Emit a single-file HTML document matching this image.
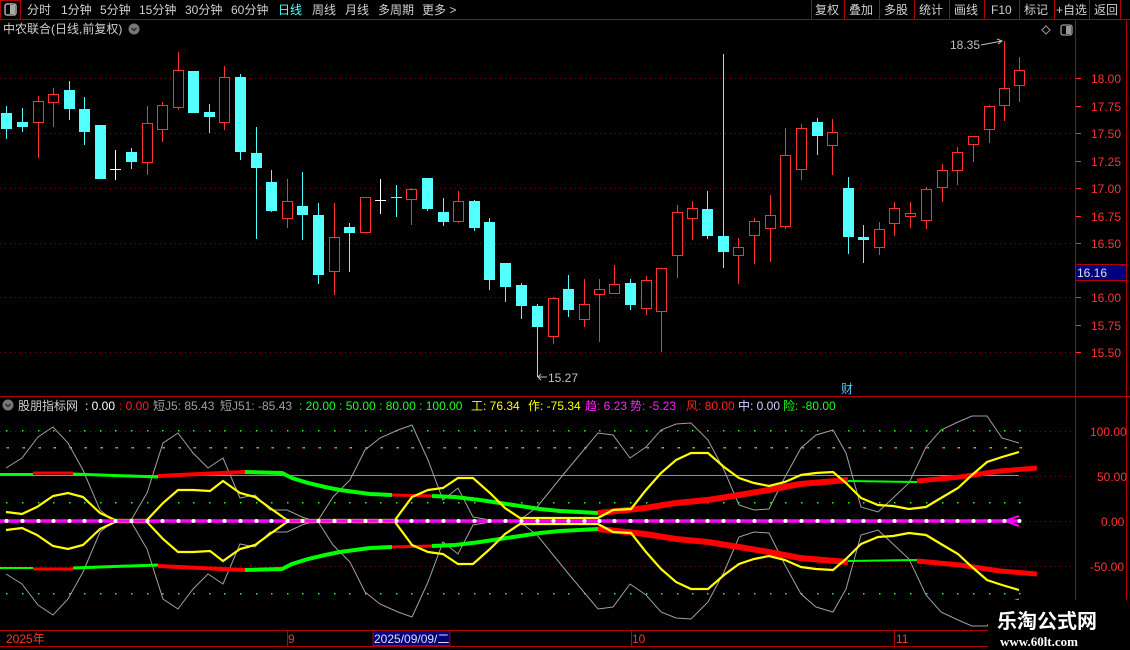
<!DOCTYPE html>
<html><head><meta charset="utf-8"><style>
html,body{margin:0;padding:0;background:#000;width:1130px;height:650px;overflow:hidden}
svg{display:block}
text{font-family:"Liberation Sans","Noto Sans CJK SC",sans-serif;font-size:12px}
</style></head><body>
<svg id="s" width="1130" height="650" viewBox="0 0 1130 650" xmlns="http://www.w3.org/2000/svg">
<rect width="1130" height="650" fill="#000"/>
<!-- top bar -->
<line x1="0" y1="19.5" x2="1130" y2="19.5" stroke="#b00000"/>
<rect x="0.5" y="0.5" width="20" height="19" fill="none" stroke="#b00000"/>
<rect x="5" y="4" width="11" height="11" rx="2" fill="none" stroke="#aaa" stroke-width="1.5"/>
<rect x="10" y="5" width="5" height="9" fill="#aaa"/>
<g fill="#d0d0d0">
<text x="27" y="14">分时</text><text x="61" y="14">1分钟</text><text x="100" y="14">5分钟</text>
<text x="139" y="14">15分钟</text><text x="185" y="14">30分钟</text><text x="231" y="14">60分钟</text>
<text x="278" y="14" fill="#54ffff">日线</text><text x="312" y="14">周线</text><text x="345" y="14">月线</text>
<text x="378" y="14">多周期</text><text x="422" y="14">更多 &gt;</text>
</g>
<g stroke="#b00000">
<line x1="811.5" y1="0" x2="811.5" y2="19"/><line x1="844.5" y1="0" x2="844.5" y2="19"/>
<line x1="879.5" y1="0" x2="879.5" y2="19"/><line x1="914.5" y1="0" x2="914.5" y2="19"/>
<line x1="949.5" y1="0" x2="949.5" y2="19"/><line x1="984.5" y1="0" x2="984.5" y2="19"/>
<line x1="1019.5" y1="0" x2="1019.5" y2="19"/><line x1="1054.5" y1="0" x2="1054.5" y2="19"/>
<line x1="1089.5" y1="0" x2="1089.5" y2="19"/><line x1="1120.5" y1="0" x2="1120.5" y2="19"/>
</g>
<g fill="#d0d0d0">
<text x="815" y="14">复权</text><text x="849" y="14">叠加</text><text x="884" y="14">多股</text>
<text x="919" y="14">统计</text><text x="954" y="14">画线</text><text x="991" y="14">F10</text>
<text x="1024" y="14">标记</text><text x="1056" y="14">+自选</text><text x="1094" y="14">返回</text>
</g>
<text x="3" y="33" fill="#d0d0d0">中农联合(日线,前复权)</text>
<circle cx="134" cy="29" r="5.5" fill="#777"/><path d="M131.5 28 L134 30.5 L136.5 28" fill="none" stroke="#222" stroke-width="1.3"/>
<path d="M1046 26 L1050 30 L1046 34 L1042 30 Z" fill="none" stroke="#999"/>
<rect x="1061" y="25" width="11" height="10" rx="2" fill="none" stroke="#999" stroke-width="1.3"/><rect x="1066" y="26" width="5" height="8" fill="#999"/>
<!-- axes -->
<line x1="1075.5" y1="19" x2="1075.5" y2="630" stroke="#b00000"/>
<line x1="1126.5" y1="19" x2="1126.5" y2="630" stroke="#b00000"/>
<line x1="0" y1="396.5" x2="1130" y2="396.5" stroke="#b00000"/>
<g stroke="#8a0000" stroke-dasharray="1 4">
<line x1="0" y1="78.5" x2="1075" y2="78.5"/><line x1="0" y1="133.5" x2="1075" y2="133.5"/>
<line x1="0" y1="188.5" x2="1075" y2="188.5"/><line x1="0" y1="243.5" x2="1075" y2="243.5"/>
<line x1="0" y1="297.5" x2="1075" y2="297.5"/><line x1="0" y1="352.5" x2="1075" y2="352.5"/>
</g>
<g fill="#ff3232">
<text x="1091" y="83">18.00</text><text x="1091" y="111">17.75</text><text x="1091" y="138">17.50</text>
<text x="1091" y="166">17.25</text><text x="1091" y="193">17.00</text><text x="1091" y="221">16.75</text>
<text x="1091" y="248">16.50</text><text x="1091" y="302">16.00</text><text x="1091" y="330">15.75</text>
<text x="1091" y="357">15.50</text>
</g>
<g stroke="#ff3232"><line x1="1076" y1="78.5" x2="1081" y2="78.5"/><line x1="1076" y1="106.5" x2="1081" y2="106.5"/><line x1="1076" y1="133.5" x2="1081" y2="133.5"/><line x1="1076" y1="161.5" x2="1081" y2="161.5"/><line x1="1076" y1="188.5" x2="1081" y2="188.5"/><line x1="1076" y1="216.5" x2="1081" y2="216.5"/><line x1="1076" y1="243.5" x2="1081" y2="243.5"/><line x1="1076" y1="297.5" x2="1081" y2="297.5"/><line x1="1076" y1="325.5" x2="1081" y2="325.5"/><line x1="1076" y1="352.5" x2="1081" y2="352.5"/></g>
<rect x="1075.5" y="264.5" width="51" height="16" fill="#000080" stroke="#b00000"/>
<text x="1077" y="277" fill="#e0e0e0">16.16</text>
<g id="candles"></g>
<text x="950" y="49" fill="#c0c0c0">18.35</text>
<path d="M981 45 L1002 41 M997 39 L1002 41 L998 44" stroke="#c0c0c0" fill="none"/>
<text x="548" y="382" fill="#c0c0c0">15.27</text>
<path d="M538 377 L547 377 M541 374 L538 377 L541 380" stroke="#c0c0c0" fill="none"/>
<rect x="840" y="382" width="15" height="13" fill="#000"/>
<text x="841" y="393" fill="#54c8ff">财</text>
<!-- indicator header -->
<circle cx="8" cy="405" r="5.5" fill="#777"/><path d="M5.5 404 L8 406.5 L10.5 404" fill="none" stroke="#222" stroke-width="1.3"/>
<text x="18" y="410" fill="#d0d0d0">股朋指标网</text>
<text x="85" y="410" fill="#fff">: 0.00</text>
<text x="119" y="410" fill="#ff2020">: 0.00</text>
<text x="153" y="410" fill="#a0a0a0">短J5: 85.43</text>
<text x="220" y="410" fill="#a0a0a0">短J51: -85.43</text>
<text x="299" y="410" fill="#20ff20">: 20.00 : 50.00 : 80.00 : 100.00</text>
<text x="471" y="410" fill="#ffff00">工: 76.34</text>
<text x="528" y="410" fill="#ffff00">作: -75.34</text>
<text x="585" y="410" fill="#ff20ff">趋: 6.23</text>
<text x="630" y="410" fill="#ff20ff">势: -5.23</text>
<text x="686" y="410" fill="#ff2020">风: 80.00</text>
<text x="738" y="410" fill="#d0d0ff">中: 0.00</text>
<text x="783" y="410" fill="#20ff20">险: -80.00</text>
<!-- indicator grid -->
<g stroke="#8a0000" stroke-dasharray="1 4">
<line x1="0" y1="431.5" x2="1075" y2="431.5"/><line x1="0" y1="566.5" x2="1075" y2="566.5"/>
<line x1="1020" y1="476.5" x2="1075" y2="476.5"/><line x1="1020" y1="521.5" x2="1075" y2="521.5"/>
</g>
<g id="dots"></g>
<g fill="#ff3232">
<text x="1090" y="436">100.00</text><text x="1097" y="481">50.00</text><text x="1101" y="526">0.00</text><text x="1090" y="571">-50.00</text>
</g>
<line x1="0" y1="475.5" x2="1019" y2="475.5" stroke="#20e020"/>
<g id="upper">
<polyline fill="none" stroke="#a0a0a0" stroke-width="1" points="6,468 22,458 38,437 53,427 68,443 83,470 100,510 115,522 130,522 147,493 163,443 178,433 193,453 208,468 223,458 240,498 255,495 270,510 287,510 302,517 317,522 333,497 350,480 365,450 380,438 398,430 412,425 428,460 443,500 458,488 473,517 490,520 520,520 537,507 567,470 598,433 613,435 630,458 646,447 661,430 676,424 691,423 708,440 724,470 739,505 754,510 769,509 785,477 801,448 816,435 833,430 846,453 861,507 878,512 893,498 909,483 926,447 941,430 958,422 972,416 987,416 1002,438 1019,443"/>
<g fill="none" stroke-linejoin="miter">
<polyline stroke="#00ff00" stroke-width="2" points="0,474 33,474"/>
<polyline stroke="#ff0000" stroke-width="3" points="33,473 73,473"/>
<polyline stroke="#00ff00" stroke-width="3" points="73,474 100,475 158,477"/>
<polyline stroke="#ff0000" stroke-width="4" points="158,476 200,474 245,472"/>
<polyline stroke="#00ff00" stroke-width="4" points="245,472 282,473 292,478 308,483 325,487 340,490 355,492 370,494 392,495"/>
<polyline stroke="#ff0000" stroke-width="3" points="392,495 432,496"/>
<polyline stroke="#00ff00" stroke-width="4" points="432,496 455,497 480,500 500,503 520,506 540,509 560,511 598,513"/>
<polyline stroke="#ff0000" stroke-width="6" points="598,513 645,508 676,503 708,500 739,495 769,490 800,484 848,480"/>
<polyline stroke="#00ff00" stroke-width="2" points="848,481 917,482"/>
<polyline stroke="#ff0000" stroke-width="5" points="917,481 960,477 1000,471 1037,468"/>
</g>
<polyline fill="none" stroke="#ffff00" stroke-width="2.2" points="6,512 22,514 37,507 53,496 68,493 83,497 100,513 115,520 147,520 163,503 178,490 193,490 210,491 223,481 240,493 255,497 270,508 287,520 395,520 412,497 428,490 443,488 458,478 473,478 490,493 505,508 520,518 598,518 613,510 631,509 646,490 661,473 676,460 691,453 708,453 724,467 739,478 754,483 769,486 785,482 801,475 816,473 833,472 846,483 861,498 878,505 893,506 909,509 926,507 941,498 958,488 972,475 987,462 1002,457 1019,452"/>
<path d="M1005 521 L1019 516" stroke="#ff00ff" stroke-width="2"/>
</g>
<use href="#upper" transform="translate(0,1042) scale(1,-1)"/>
<line x1="0" y1="521" x2="1019" y2="521" stroke="#ff00ff" stroke-width="3.5"/>
<g id="wdots"></g>
<!-- bottom axis -->
<line x1="0" y1="630.5" x2="1130" y2="630.5" stroke="#b00000"/>
<line x1="0" y1="646.5" x2="1130" y2="646.5" stroke="#b00000"/>
<g stroke="#b00000"><line x1="287.5" y1="630" x2="287.5" y2="646"/><line x1="631.5" y1="630" x2="631.5" y2="646"/><line x1="894.5" y1="630" x2="894.5" y2="646"/></g>
<g fill="#ff3232"><text x="6" y="643">2025年</text><text x="288" y="643">9</text><text x="632" y="643">10</text><text x="896" y="643">11</text></g>
<rect x="373" y="630.5" width="77" height="15" fill="#000080" stroke="#b00000"/>
<text x="374" y="643" fill="#e0e0e0">2025/09/09/二</text>
<!-- watermark -->
<rect x="988" y="600" width="142" height="50" fill="#000"/>
<text x="997" y="628" fill="#fff" style="font-size:20px;font-weight:bold">乐淘公式网</text>
<text x="1000" y="646" fill="#fff" style="font-size:13px;font-family:'Liberation Serif',serif;font-weight:bold">www.60lt.com</text>
</svg>
<script>
var C=[[6,'c',106,113,129,139],[22,'c',108,122,127,132],[38,'r',96,101,122,158],[53,'r',88,94,102,127],[69,'c',81,90,109,120],[84,'c',97,109,132,145],[100,'c',125,125,179,179],[115,'w',150,169,169,180],[131,'c',148,152,162,169],[147,'r',106,123,162,175],[162,'r',102,105,129,142],[178,'r',52,70,107,110],[193,'c',71,71,113,113],[209,'c',104,112,117,133],[224,'r',66,77,122,130],[240,'c',74,77,152,160],[256,'c',127,153,168,239],[271,'c',170,182,211,212],[287,'r',179,201,218,228],[302,'c',172,206,215,240],[318,'c',203,215,275,284],[334,'r',203,237,271,295],[349,'c',223,227,233,272],[365,'r',197,197,232,232],[380,'w',179,200,200,214],[396,'c',185,197,197,217],[411,'r',188,189,199,225],[427,'c',178,178,209,211],[443,'c',198,212,222,226],[458,'r',191,201,221,223],[474,'c',200,201,228,231],[489,'c',218,222,280,290],[505,'c',263,263,287,302],[521,'c',283,285,306,319],[537,'c',304,306,327,377],[553,'r',297,298,336,344],[568,'c',275,289,310,317],[584,'r',279,304,319,327],[599,'r',279,289,294,342],[614,'r',265,284,293,293],[630,'c',279,283,305,310],[646,'r',276,280,308,315],[661,'r',268,268,311,352],[677,'r',205,212,255,278],[692,'r',201,208,218,240],[707,'c',191,209,236,239],[723,'c',54,236,252,268],[738,'r',238,247,255,284],[754,'r',218,221,235,264],[770,'r',195,215,228,262],[785,'r',128,155,226,229],[801,'r',124,128,169,180],[817,'c',118,122,136,155],[832,'r',119,132,145,175],[848,'c',177,188,237,254],[863,'c',225,237,240,263],[879,'r',222,229,247,255],[894,'r',202,208,223,236],[910,'r',202,213,216,228],[926,'r',187,189,220,229],[942,'r',164,170,187,202],[957,'r',147,152,170,185],[973,'r',136,136,144,162],[989,'r',105,106,129,143],[1004,'r',41,88,105,121],[1019,'r',57,70,85,102]];
var g=document.getElementById('candles'),h='';
C.forEach(function(c){var x=c[0],t=c[1],H=c[2],T=c[3],B=c[4],L=c[5];
var col=t=='r'?'#ff3232':(t=='c'?'#54ffff':'#ffffff');var xm=x+0.5;
h+='<line x1="'+xm+'" y1="'+H+'" x2="'+xm+'" y2="'+L+'" stroke="'+col+'"/>';
if(t=='w'||B-T<1){h+='<line x1="'+(x-5)+'" y1="'+(T+0.5)+'" x2="'+(x+6)+'" y2="'+(T+0.5)+'" stroke="'+col+'"/>';}
else if(t=='r'){h+='<rect x="'+(x-4.5)+'" y="'+(T+0.5)+'" width="10" height="'+(B-T)+'" fill="#000" stroke="'+col+'"/>';}
else{h+='<rect x="'+(x-5)+'" y="'+T+'" width="11" height="'+(B-T)+'" fill="'+col+'"/>';}
});
g.innerHTML=h;
var d='',w='';
for(var i=0;i<C.length;i++){var x=C[i][0];
d+='<rect x="'+x+'" y="447" width="1.5" height="1.5" fill="#ff2020"/><rect x="'+(x+1.5)+'" y="447" width="1.5" height="1.5" fill="#20ff20"/>';
d+='<rect x="'+x+'" y="502" width="1.5" height="1.5" fill="#20ff20"/><rect x="'+x+'" y="593" width="1.5" height="1.5" fill="#20ff20"/>';
d+='<rect x="'+x+'" y="430" width="1.5" height="1.5" fill="#20ff20"/>';
w+='<circle cx="'+(x+0.5)+'" cy="521" r="2" fill="#fff"/>';}
document.getElementById('dots').innerHTML=d;
document.getElementById('wdots').innerHTML=w;
</script>
</body></html>
